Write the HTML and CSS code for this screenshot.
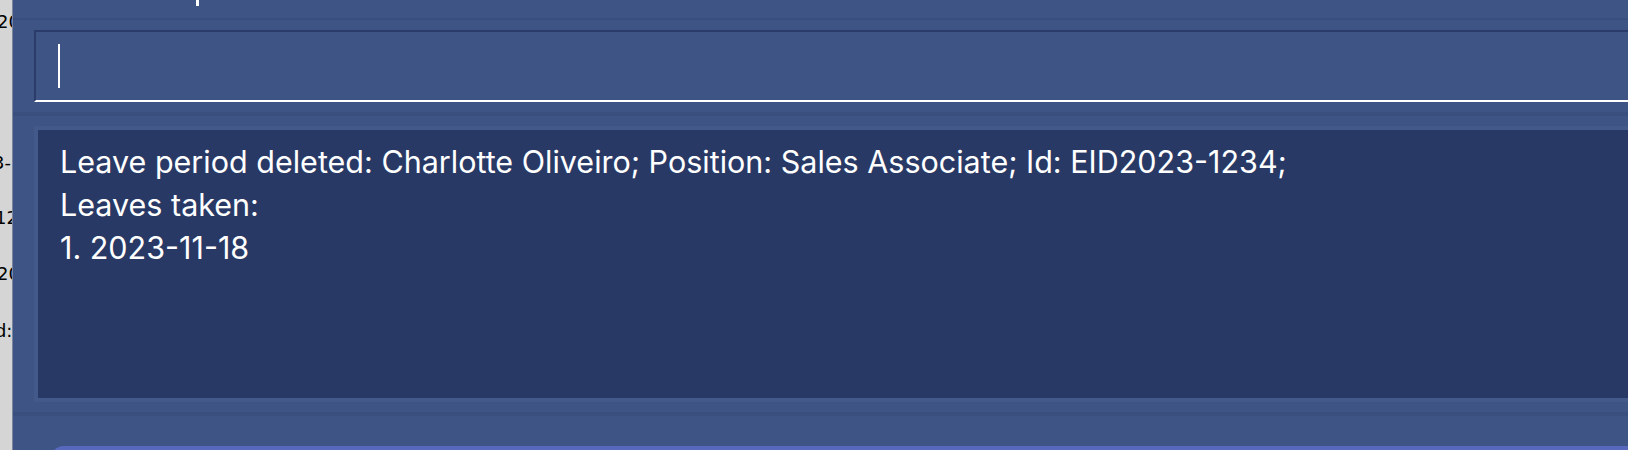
FILE: index.html
```html
<!DOCTYPE html>
<html>
<head>
<meta charset="utf-8">
<link rel="stylesheet" href="styles.css">
</head>
<body>
<div class="app">
  <div class="behind">
    <div class="behind-line l1">20</div>
    <div class="behind-line l2">3-</div>
    <div class="behind-line l3">12</div>
    <div class="behind-line l4">20</div>
    <div class="behind-line l5">d :</div>
  </div>
  <div class="main">
    <div class="header"><span class="tick"></span></div>
    <div class="command-section">
      <div class="command-box"><span class="caret"></span></div>
    </div>
    <div class="divider"></div>
    <div class="result-section">
      <div class="result-box">
        <div class="result-text">Leave period deleted: Charlotte Oliveiro; Position: Sales Associate; Id: EID2023-1234;<br>Leaves taken:<br>1. 2023-11-18</div>
      </div>
    </div>
    <div class="divider"></div>
    <div class="footer-section">
      <div class="footer-pill"></div>
    </div>
  </div>
</div>
</body>
</html>
```

FILE: styles.css
```css
html, body {
  margin: 0;
  padding: 0;
  width: 1628px;
  height: 450px;
  overflow: hidden;
  background: #3e5485;
}
.app {
  display: flex;
  width: 1628px;
  height: 450px;
}
.behind {
  width: 12px;
  flex: none;
  background: #d5d5d5;
  border-right: 1px solid #7a86a0;
  overflow: hidden;
  position: relative;
  font-family: "DejaVu Sans", sans-serif;
  font-size: 18px;
  line-height: 20px;
  color: #000;
}
.behind-line {
  position: absolute;
  white-space: nowrap;
}
.behind-line.l1 { top: 12px; left: -3px; }
.behind-line.l2 { top: 153px; left: -7px; }
.behind-line.l3 { top: 208px; left: -5px; }
.behind-line.l4 { top: 264px; left: -3px; }
.behind-line.l5 { top: 321px; left: -5px; letter-spacing: -3px; }
.main {
  flex: 1;
  display: flex;
  flex-direction: column;
  background: #3e5485;
  overflow: hidden;
}
.header {
  height: 18px;
  border-bottom: 2px solid #394e7e;
  position: relative;
  flex: none;
}
.tick {
  position: absolute;
  left: 183px;
  top: 0;
  width: 3px;
  height: 6px;
  background: #ffffff;
}
.command-section {
  padding: 10px 0 10px 21px;
  flex: none;
}
.command-box {
  height: 56px;
  border-top: 2px solid #2b3c6a;
  border-left: 2px solid #2b3c6a;
  border-bottom: 2px solid #ffffff;
  background: #3e5485;
  padding-left: 22px;
  padding-top: 12px;
  box-sizing: content-box;
}
.caret {
  display: block;
  width: 2px;
  height: 44px;
  background: #ffffff;
}
.divider {
  height: 4px;
  background: #3a4f7e;
  flex: none;
}
.result-section {
  padding: 10px 0 10px 21px;
  flex: none;
}
.result-box {
  height: 258px;
  border-top: 4px solid #42598a;
  border-left: 4px solid #42598a;
  border-bottom: 4px solid #42598a;
  background: #293966;
  padding: 10px 0 0 22px;
  box-sizing: content-box;
}
.result-text {
  font-family: Inter, "Noto Sans", sans-serif;
  font-size: 30.5px;
  line-height: 43px;
  color: #ffffff;
  white-space: nowrap;
}
.footer-section {
  flex: 1;
  padding: 30px 0 0 37px;
}
.footer-pill {
  height: 20px;
  background: #5868bd;
  border-radius: 14px 0 0 0;
}
```
